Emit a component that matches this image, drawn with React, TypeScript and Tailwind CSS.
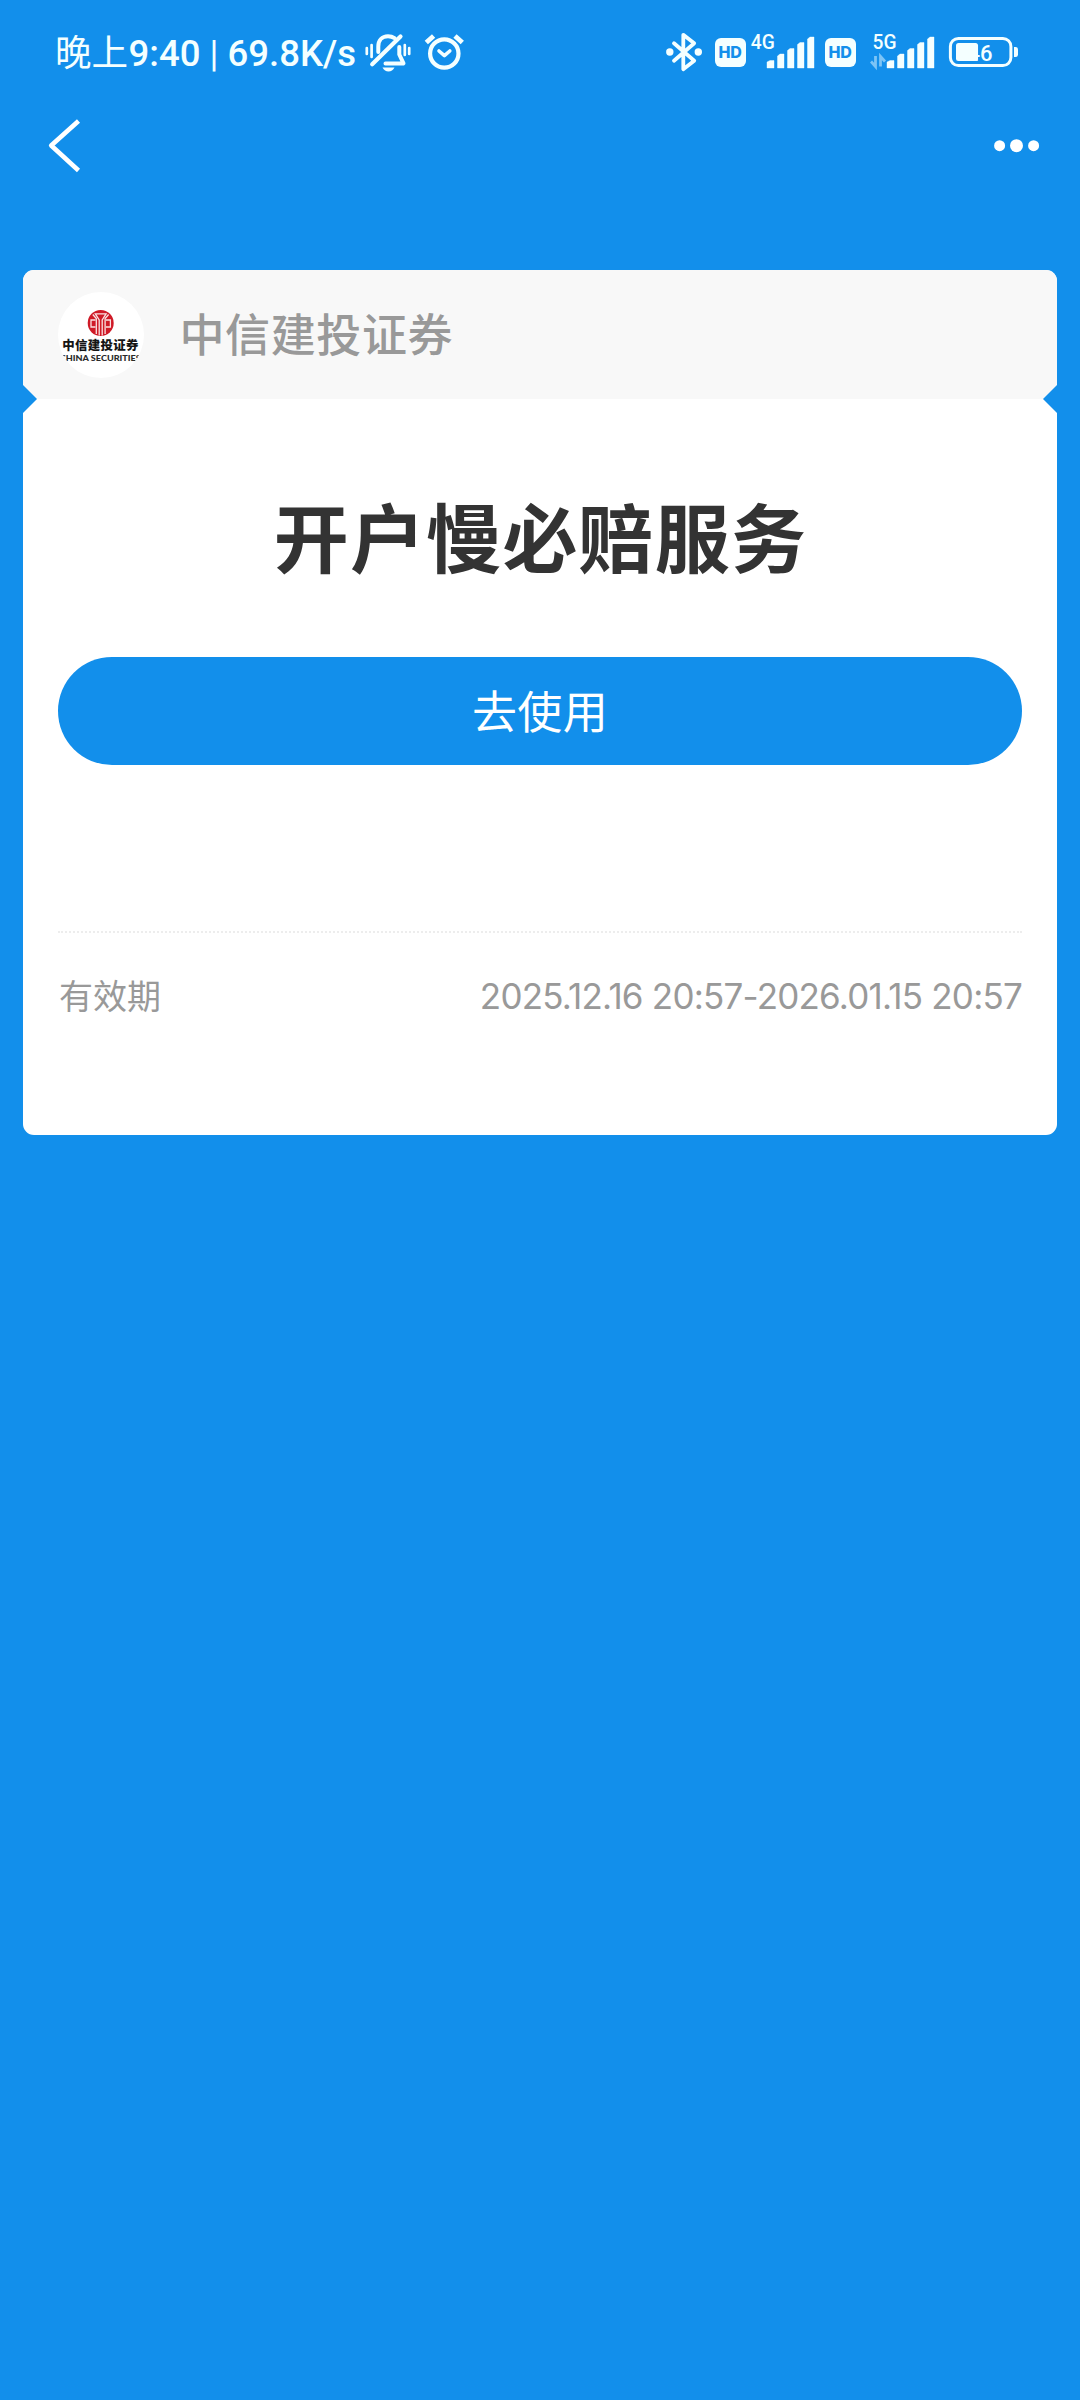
import React from "react";

function BellOff() {
  return (
    <svg className="ml-[9px] shrink-0" width="46" height="40" viewBox="365 32 46 40" fill="none" stroke="#f4ffff" strokeWidth="4" strokeLinecap="round" strokeLinejoin="round">
      <path d="M378.3 52V46.5C378.3 40.5 382 36.2 388 36.2C390.5 36.2 392.5 36.8 394.5 38.2" />
      <path d="M400.5 36.5L372.2 64.3" strokeWidth="4.2" />
      <path d="M399.3 47V54.5L403.5 63.4H385.5" />
      <path d="M382.5 67.6H394.5C393 70.3 391.2 71.6 388.5 71.6S384 70.3 382.5 67.6Z" fill="#f4ffff" stroke="none" />
      <path d="M366.8 48V54M371.6 45V57M404.8 45V55M409.2 48V54" strokeWidth="2.7" />
    </svg>
  );
}

function Alarm() {
  return (
    <svg className="ml-[13px] shrink-0" width="42" height="40" viewBox="424 32 42 40" fill="none" stroke="#f4ffff" strokeWidth="4.2" strokeLinecap="round" strokeLinejoin="round">
      <circle cx="444.3" cy="53.5" r="14.2" />
      <path d="M426.3 42.6L433.6 35.9M455 35.9L462.3 42.6" strokeLinecap="butt" strokeWidth="4.8" />
      <path d="M439 51L444.4 55.6L449.8 51" strokeWidth="3.6" />
    </svg>
  );
}

function Bluetooth() {
  return (
    <svg className="shrink-0" width="38" height="40" viewBox="665 32 38 40" fill="none" stroke="#f4ffff" strokeWidth="3.8" strokeLinejoin="round" strokeLinecap="round">
      <path d="M674 43.2L694.2 60.8L683.3 69.2V34.8L694.2 43.2L674 60.8" />
      <circle cx="669.8" cy="52" r="3.7" fill="#f4ffff" stroke="none" />
      <circle cx="698.3" cy="52" r="3.7" fill="#f4ffff" stroke="none" />
    </svg>
  );
}

function Hd() {
  return (
    <div className="flex h-[29px] w-[31px] shrink-0 items-center justify-center rounded-[6px] bg-[#f4ffff] font-['Inter'] text-[16px] leading-none font-extrabold tracking-[-0.3px] text-[#128feb]">
      HD
    </div>
  );
}

function Signal({ label, data }: { label: string; data?: boolean }) {
  return (
    <svg className="shrink-0" width="66" height="40" viewBox="0 0 66 40" fill="#f4ffff">
      <text x={data ? 2.5 : 0.8} y="16.8" fontFamily="Roboto" fontWeight="500" fontSize="19.5" textLength="24" lengthAdjust="spacingAndGlyphs">{label}</text>
      <path d="M17 36V30L20 28.5H24V36ZM27.5 36V24L30 22H34V36ZM37.5 36V18.5L40 16.5H44V36ZM47.5 36V12.5L50 10.5H54V36ZM57.5 36V7L60 5H64V36Z" stroke="#f4ffff" strokeWidth="0.4" />
      {data && <path d="M5.5 24V34.5L1 29.5M10.5 34.5V24.5L15 29.5" fill="none" stroke="#7cc4f6" strokeWidth="2.8" />}
    </svg>
  );
}

function Battery() {
  return (
    <svg className="ml-[12px] shrink-0" width="71" height="40" viewBox="948 32 71 40" fill="#f4ffff">
      <rect x="950.4" y="38.4" width="60.5" height="27.2" rx="8" fill="none" stroke="#f4ffff" strokeWidth="3" />
      <text x="967.6" y="60.8" fontFamily="Roboto" fontWeight="500" fontSize="22" textLength="25">46</text>
      <rect x="956" y="43" width="22" height="18" rx="2.5" />
      <path d="M1014 47H1015.5Q1018 47 1018 49.5V54.5Q1018 57 1015.5 57H1014Z" />
    </svg>
  );
}

function StatusBar() {
  return (
    <div className="flex h-[104px] items-center pr-[61.5px] pl-[55px] text-[#f4ffff]">
      <div className="mt-[3px] flex w-[301px] shrink-0 items-baseline font-['Roboto','Noto_Sans_CJK_SC',sans-serif] text-[36.5px] leading-[44px] font-medium whitespace-pre">
        <span className="w-[75px] text-[36.5px] font-normal">晚上</span>
        <span className="w-[101px]">9:40 <span className="font-normal">|</span> </span>
        <span>69.8K/s</span>
      </div>
      <BellOff />
      <Alarm />
      <div className="ml-auto flex items-center">
        <Bluetooth />
        <div className="ml-[12px]"><Hd /></div>
        <div className="ml-[4px]"><Signal label="4G" /></div>
        <div className="ml-[9px]"><Hd /></div>
        <div className="ml-[14px]"><Signal label="5G" data /></div>
        <Battery />
      </div>
    </div>
  );
}

function NavBar() {
  return (
    <div className="flex h-[83px] items-center justify-between pr-[40px] pl-[46px]">
      <svg width="38" height="56" viewBox="46 117.5 38 56" fill="none" stroke="#fff" strokeWidth="4.6" strokeLinejoin="round">
        <path d="M78.5 120.5L51.2 145L78.5 170" />
      </svg>
      <svg width="48" height="16" viewBox="992 137.5 48 16" fill="#fff">
        <circle cx="999.6" cy="145.2" r="5.5" />
        <circle cx="1016.5" cy="145.2" r="6.5" />
        <circle cx="1033.6" cy="145.2" r="5.5" />
      </svg>
    </div>
  );
}

function BrandLogo() {
  return (
    <svg className="shrink-0" width="86" height="86" viewBox="0 0 86 86">
      <defs>
        <clipPath id="logo-clip"><circle cx="43" cy="43" r="43" /></clipPath>
      </defs>
      <circle cx="43" cy="43" r="43" fill="#fff" />
      <circle cx="42.7" cy="31" r="13" fill="#cf1a27" />
      <g fill="none" stroke="#fbe3e3" strokeWidth="1.3">
        <path d="M38.3 42V26.5L34.8 22.5M47.1 42V26.5L50.6 22.5M41.2 43.5V28L37.3 21.8H48.1L44.2 28V43.5" />
        <path d="M37.5 28H33V35H37.5M47.9 28H52.4V35H47.9" />
      </g>
      <text x="4.3" y="58" fontFamily="'Noto Sans CJK SC', sans-serif" fontWeight="900" fontSize="12.4" textLength="76" fill="#151515">中信建投证券</text>
      <g clipPath="url(#logo-clip)">
        <text x="1.8" y="68.6" fontFamily="Lato" fontWeight="900" fontSize="7.8" textLength="81" lengthAdjust="spacingAndGlyphs" fill="#2a2a2a">CHINA SECURITIES</text>
      </g>
    </svg>
  );
}

function CouponCard() {
  return (
    <div className="relative mx-[23px] mt-[83px] h-[864.5px] overflow-hidden rounded-[11px] bg-white">
      <div className="flex h-[129px] items-center bg-[#f8f8f8] pl-[34.5px]">
        <BrandLogo />
        <div className="mb-[4px] ml-[36px] text-[45px] leading-none font-medium tracking-[0.6px] text-[#999]">中信建投证券</div>
      </div>
      <div className="absolute top-[115px] left-0 h-[28px] w-[14px] bg-[#128feb] [clip-path:polygon(0_0,100%_50%,0_100%)]" />
      <div className="absolute top-[115px] right-0 h-[28px] w-[14px] bg-[#128feb] [clip-path:polygon(100%_0,0_50%,100%_100%)]" />
      <div className="px-[35px]">
        <h1 className="mt-[81px] pl-[1px] text-center text-[75px] leading-[110px] font-bold tracking-[1.2px] text-[#333]">开户慢必赔服务</h1>
        <button className="mt-[67px] flex h-[108px] w-full items-center justify-center rounded-full bg-[#128feb] pb-[4px] text-[45px] leading-none tracking-[0.4px] text-white">去使用</button>
        <div className="mt-[166px] border-t-2 border-dotted border-[#ededed]" />
        <div className="mt-[41px] flex h-[44px] items-center justify-between text-[#999]">
          <span className="mb-[2px] ml-px text-[34px] leading-none">有效期</span>
          <span className="font-['Inter'] text-[35px] leading-none tracking-[-0.78px] whitespace-nowrap">2025.12.16 20:57-2026.01.15 20:57</span>
        </div>
      </div>
    </div>
  );
}

export default function App() {
  return (
    <main className="h-[2400px] w-[1080px] overflow-hidden bg-[#128feb] font-['Noto_Sans_CJK_SC',sans-serif]">
      <StatusBar />
      <NavBar />
      <CouponCard />
    </main>
  );
}
